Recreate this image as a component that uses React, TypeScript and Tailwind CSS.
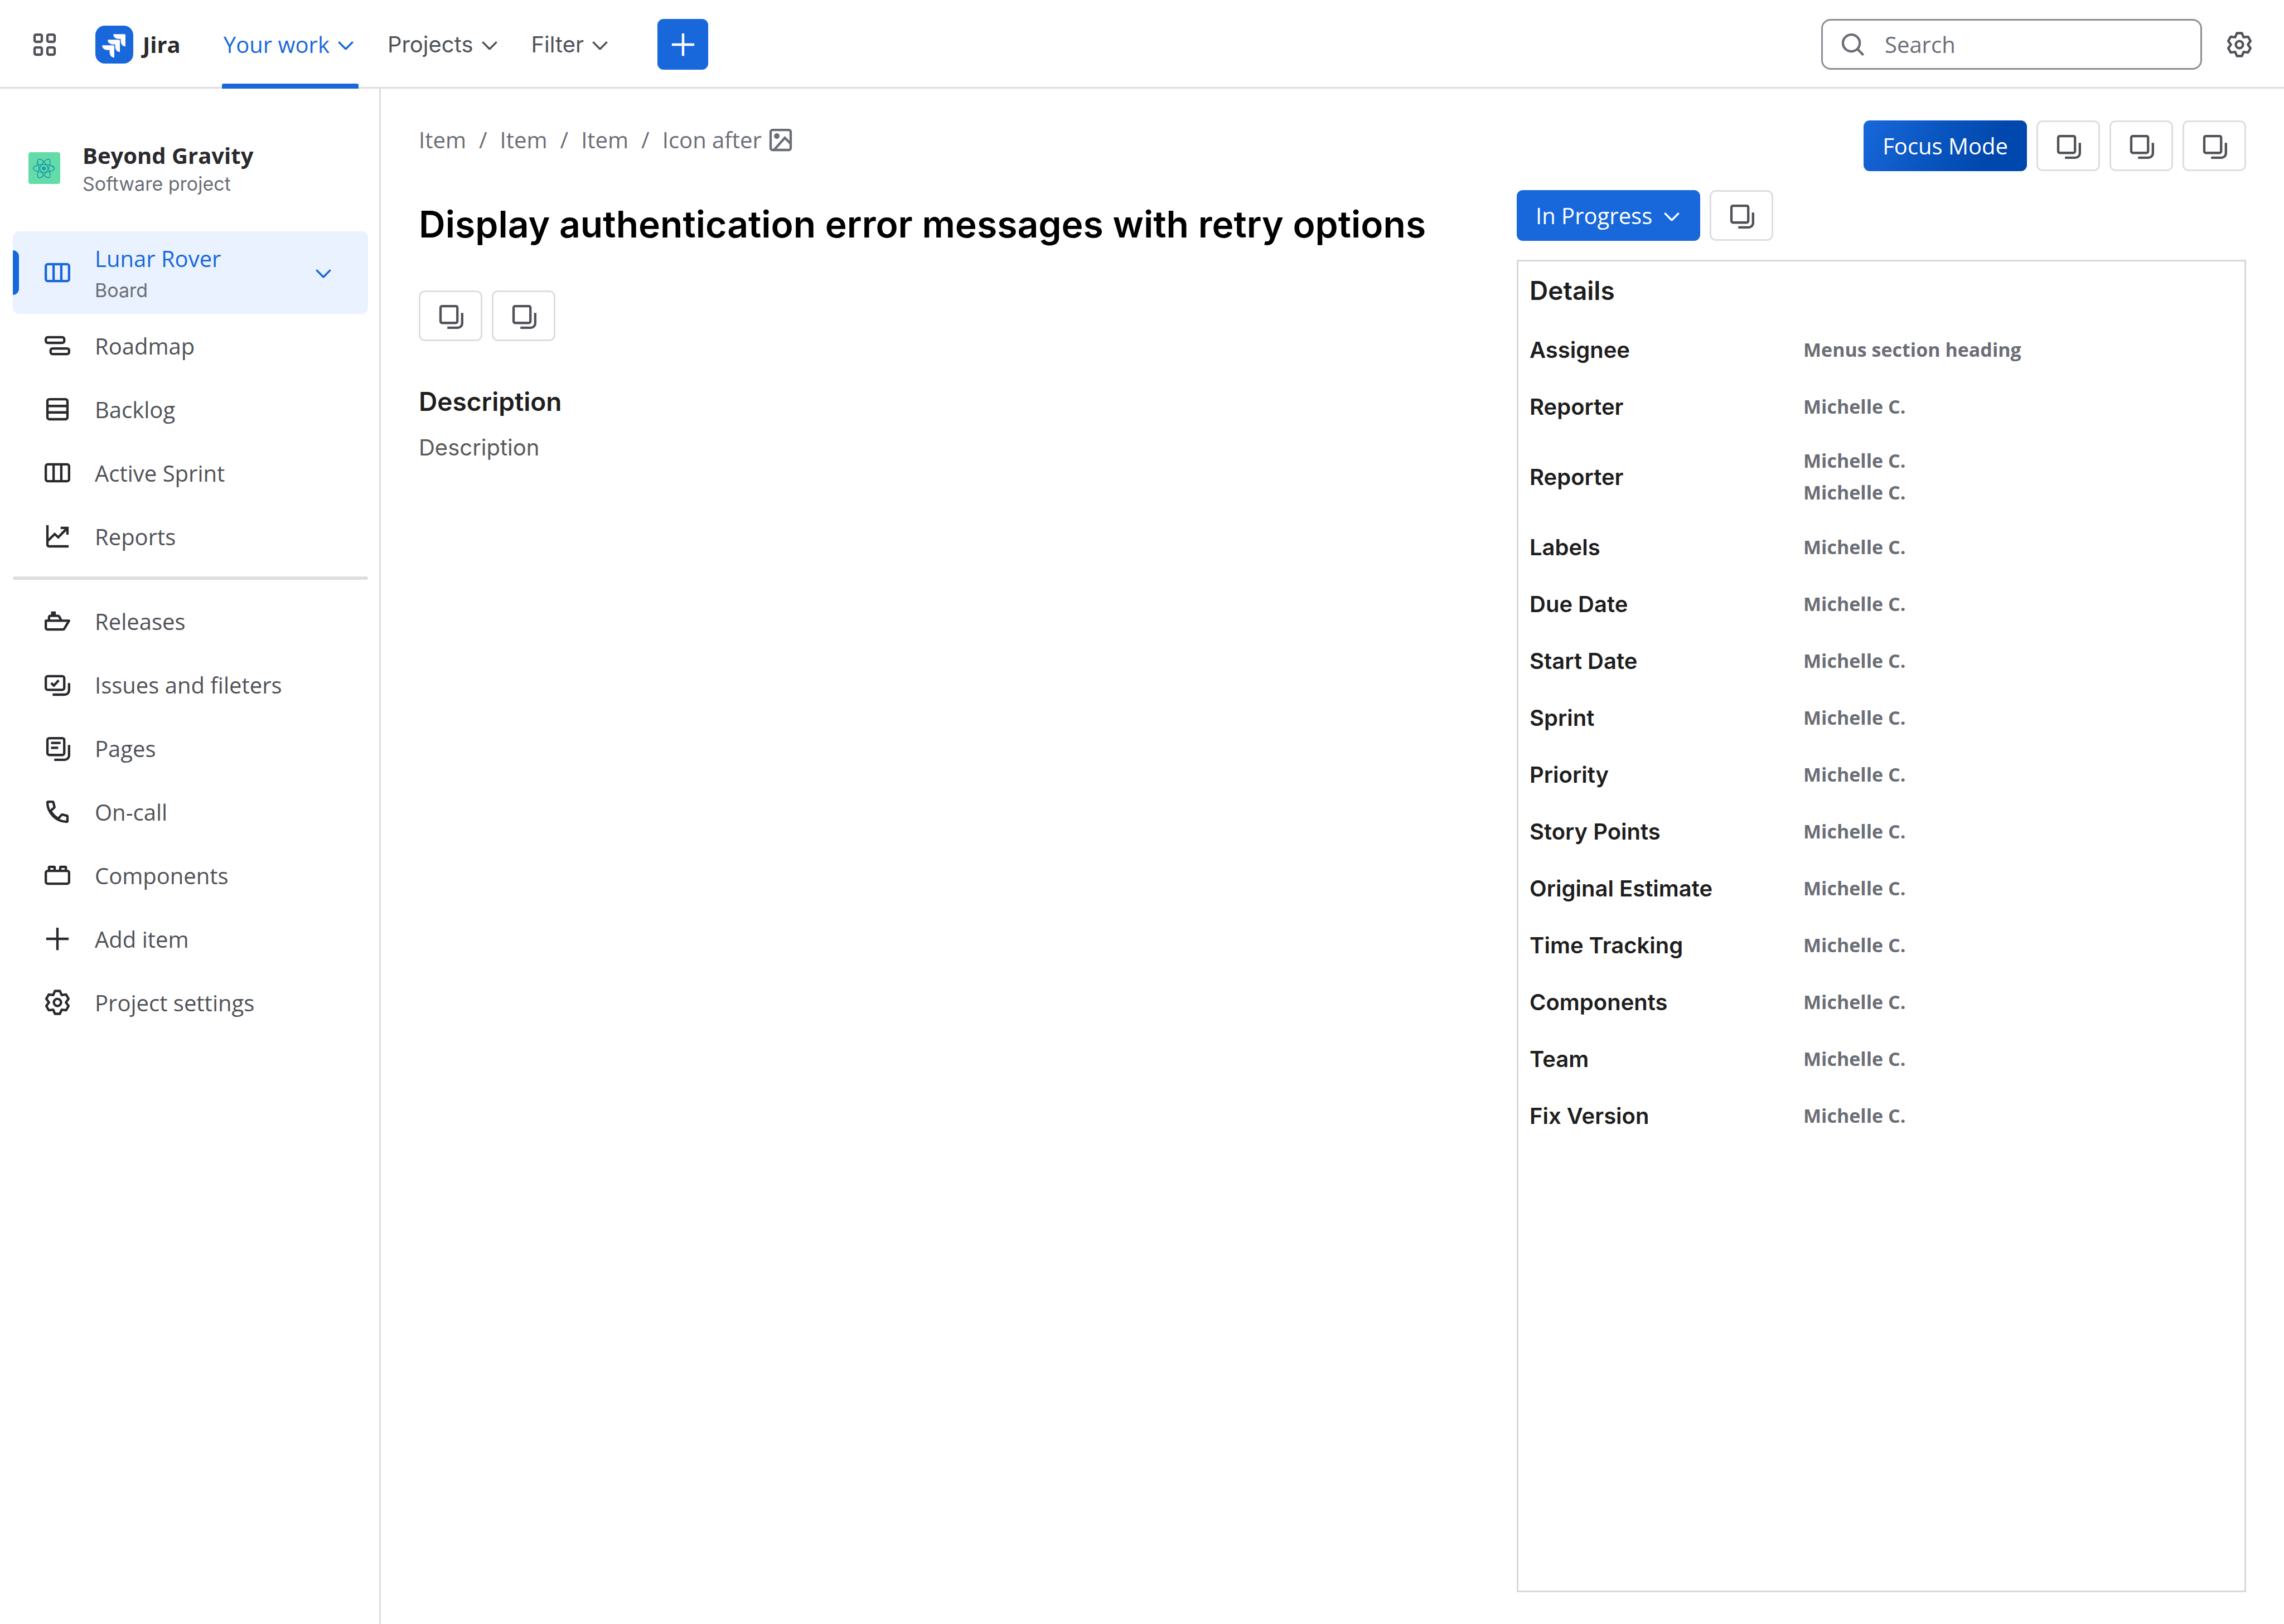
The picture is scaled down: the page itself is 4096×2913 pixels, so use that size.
import React from "react";

type Box = { className?: string; children?: React.ReactNode };

const Svg = ({ className = "size-[46px]", children }: Box) => (
  <svg viewBox="0 0 16 16" fill="none" stroke="currentColor" strokeWidth={1.5} className={"shrink-0 " + className} aria-hidden="true">
    {children}
  </svg>
);

const AppsIcon = () => (
  <Svg>
    <rect x="1.75" y="1.75" width="4.5" height="4.5" rx="0.9" />
    <rect x="9.75" y="1.75" width="4.5" height="4.5" rx="0.9" />
    <rect x="1.75" y="9.75" width="4.5" height="4.5" rx="0.9" />
    <rect x="9.75" y="9.75" width="4.5" height="4.5" rx="0.9" />
  </Svg>
);

const ChevronIcon = () => (
  <Svg>
    <path d="M3.6 6.3 8 10.8l4.4-4.5" strokeWidth={1.2} strokeLinejoin="bevel" />
  </Svg>
);

const PlusIcon = () => (
  <Svg>
    <path d="M8 1v14M1 8h14" />
  </Svg>
);

const SearchIcon = () => (
  <Svg>
    <circle cx="7" cy="7" r="5.25" />
    <path d="m10.8 10.8 3.7 3.7" />
  </Svg>
);

const GearIcon = () => (
  <Svg>
    <path
      strokeLinejoin="round"
      d="M6.48.86h3.04l1.13 2.55 2.77-.29 1.52 2.62L13.3 8l1.64 2.26-1.52 2.62-2.77-.29-1.13 2.55H6.48l-1.13-2.55-2.77.29-1.52-2.62L2.7 8 1.06 5.74l1.52-2.62 2.77.29z"
    />
    <circle cx="8" cy="8" r="2.25" />
  </Svg>
);

const CopyIcon = () => (
  <Svg>
    <rect x="1.75" y="1.75" width="10.5" height="10.5" rx="1" />
    <path d="M15.25 6v6.5a2.75 2.75 0 0 1-2.75 2.75H6" />
  </Svg>
);

const BoardIcon = () => (
  <Svg>
    <rect x="0.75" y="2.75" width="14.5" height="10.5" rx="1.2" />
    <path d="M5.6 3v10M10.4 3v10" />
  </Svg>
);

const RoadmapIcon = () => (
  <Svg>
    <rect x="0.75" y="2.75" width="11.5" height="3.5" rx="1.2" />
    <rect x="3.75" y="9.75" width="11.5" height="3.5" rx="1.2" />
  </Svg>
);

const BacklogIcon = () => (
  <Svg>
    <rect x="1.75" y="1.75" width="12.5" height="12.5" rx="1.2" />
    <path d="M2 6h12M2 10h12" />
  </Svg>
);

const ReportsIcon = () => (
  <Svg>
    <path d="M1.75 1v12.25a1 1 0 0 0 1 1H15" />
    <path d="M2 10.8l4.3-4.2 2.2 2L14 3M10 2.75h4.25v4.2" />
  </Svg>
);

const ShipIcon = () => (
  <Svg>
    <path strokeLinejoin="round" d="M.75 7.75h14.5l-3 5.05a1 1 0 0 1-.85.45H1.75a1 1 0 0 1-1-1z" />
    <path d="M2.75 7.5V5.6a.85.85 0 0 1 .85-.85h4.7a1 1 0 0 1 .85.5L10.3 7.5" />
    <path d="M4 3.4h3" strokeWidth={2.8} />
  </Svg>
);

const IssuesIcon = () => (
  <Svg>
    <rect x="0.75" y="2.75" width="11.5" height="8.5" rx="1.2" />
    <path d="m4.1 7 1.7 1.6 3-3.3" />
    <path d="M15.25 7v4.5a2.75 2.75 0 0 1-2.75 2.75H5" />
  </Svg>
);

const PagesIcon = () => (
  <Svg>
    <rect x="1.75" y="1.75" width="10.5" height="10.5" rx="1.2" />
    <path d="M4 4.75h6M4 7.75h4.5M15.25 6v6.5a2.75 2.75 0 0 1-2.75 2.75H6" />
  </Svg>
);

const PhoneIcon = () => (
  <Svg>
    <path
      strokeLinejoin="round"
      d="M1.75 2.3c0-.3.25-.55.55-.55h2.6c.25 0 .48.17.54.4l.7 2.75a.6.6 0 0 1-.2.6L3.7 7.4a11 11 0 0 0 4.9 4.9l1.9-2.3a.6.6 0 0 1 .6-.2l2.75.7c.25.06.4.28.4.54v2.66c0 .3-.25.55-.55.55C7.3 14.25 1.75 8.7 1.75 2.3z"
    />
  </Svg>
);

const BrickIcon = () => (
  <Svg>
    <rect x="0.75" y="5.25" width="14.5" height="8" rx="1.2" />
    <path d="M2.75 5.25V3.1a.35.35 0 0 1 .35-.35h2.8a.35.35 0 0 1 .35.35v2.15M9.75 5.25V3.1a.35.35 0 0 1 .35-.35h2.8a.35.35 0 0 1 .35.35v2.15" />
  </Svg>
);

const ImageIcon = () => (
  <Svg>
    <rect x="1.75" y="1.75" width="12.5" height="12.5" rx="1.2" />
    <circle cx="5.6" cy="5.6" r="1.75" fill="currentColor" stroke="none" />
    <path d="m3.9 14.2 6.7-7.5 3.7 3.7" />
  </Svg>
);

const JiraLogo = () => (
  <svg viewBox="0 0 24 24" className="size-[68px] shrink-0" aria-hidden="true">
    <rect width="24" height="24" rx="6" fill="#1868db" />
    <path
      fill="#fff"
      d="M9.051 15.434H7.734c-1.988 0-3.413-1.218-3.413-3h7.085c.367 0 .605.26.605.63v7.13c-1.772 0-2.96-1.435-2.96-3.434zm3.5-3.543h-1.318c-1.987 0-3.413-1.196-3.413-2.978h7.085c.367 0 .627.239.627.608v7.13c-1.772 0-2.981-1.435-2.981-3.434zm3.52-3.522h-1.317c-1.987 0-3.413-1.217-3.413-3h7.085c.367 0 .605.262.605.61v7.129c-1.771 0-2.96-1.435-2.96-3.434z"
    />
  </svg>
);

const ProjectAvatar = () => (
  <svg viewBox="0 0 20 20" className="size-[57px] shrink-0" aria-hidden="true">
    <rect width="20" height="20" rx="1.5" fill="#65dbaa" />
    <g fill="none" stroke="#159aa6" strokeWidth="0.55">
      <ellipse cx="9.7" cy="10.2" rx="6.6" ry="2.5" />
      <ellipse cx="9.7" cy="10.2" rx="6.6" ry="2.5" transform="rotate(60 9.7 10.2)" />
      <ellipse cx="9.7" cy="10.2" rx="6.6" ry="2.5" transform="rotate(120 9.7 10.2)" />
    </g>
    <g fill="#159aa6">
      <circle cx="9.7" cy="10.2" r="1.2" />
      <circle cx="5.7" cy="6.8" r="0.6" />
      <circle cx="15.4" cy="9" r="0.6" />
    </g>
  </svg>
);

const CopyButton = ({ label }: { label: string }) => (
  <button
    aria-label={label}
    className="flex h-[91px] w-[114px] shrink-0 items-center justify-center rounded-[11px] border-[3px] border-[#dddee1] bg-white text-[#505258]"
  >
    <CopyIcon />
  </button>
);

const menus = [
  { label: "Your work", active: true },
  { label: "Projects", active: false },
  { label: "Filter", active: false },
];

const TopBar = () => (
  <header className="flex h-[159px] items-center border-b-[3px] border-[#dddee1] px-[57px] pt-[3px]">
    <button aria-label="Switch apps" className="text-[#505258]">
      <AppsIcon />
    </button>
    <a href="#" className="ml-[68px] flex items-center gap-[17px] text-[40px] leading-[57px] font-bold text-[#292a2e]">
      <JiraLogo />
      Jira
    </a>
    <nav className="ml-[74px] flex gap-[49px] self-stretch">
      {menus.map((m) => (
        <button
          key={m.label}
          className={
            m.active
              ? "relative flex items-center gap-[6px] pl-[3px] text-[40px] leading-[57px] text-[#1868db]"
              : "flex items-center gap-[6px] pl-[3px] font-[Inter,sans-serif] text-[40px] leading-[57px] text-[#505258]"
          }
        >
          {m.label}
          <ChevronIcon />
          {m.active && <span className="absolute inset-x-0 -bottom-[3px] h-[9px] rounded-t-[3px] bg-[#1868db]" />}
        </button>
      ))}
    </nav>
    <button aria-label="Create" className="ml-[80px] flex size-[91px] items-center justify-center rounded-[11px] bg-[#1868db] text-white">
      <PlusIcon />
    </button>
    <label className="ml-auto flex h-[91px] w-[683px] items-center gap-[34px] rounded-[17px] border-[3px] border-[#8c8f97] pl-[31px] text-[#6b6e76]">
      <SearchIcon />
      <input
        type="search"
        aria-label="Search"
        placeholder="Search"
        className="min-w-0 flex-1 bg-transparent text-[40px] leading-[57px] outline-none placeholder:text-[#6b6e76]"
      />
    </label>
    <button aria-label="Settings" className="ml-[44px] text-[#505258]">
      <GearIcon />
    </button>
  </header>
);

const boardLinks = [
  { label: "Roadmap", Icon: RoadmapIcon },
  { label: "Backlog", Icon: BacklogIcon },
  { label: "Active Sprint", Icon: BoardIcon },
  { label: "Reports", Icon: ReportsIcon },
];

const projectLinks = [
  { label: "Releases", Icon: ShipIcon },
  { label: "Issues and fileters", Icon: IssuesIcon },
  { label: "Pages", Icon: PagesIcon },
  { label: "On-call", Icon: PhoneIcon },
  { label: "Components", Icon: BrickIcon },
  { label: "Add item", Icon: PlusIcon },
  { label: "Project settings", Icon: GearIcon },
];

const SideLink = ({ label, Icon }: { label: string; Icon: () => React.ReactElement }) => (
  <li>
    <a href="#" className="flex h-[114px] items-center gap-[44px] pl-[57px] text-[40px] leading-[57px] text-[#505258]">
      <span className="text-[#292a2e]">
        <Icon />
      </span>
      {label}
    </a>
  </li>
);

const SideBar = () => (
  <aside className="w-[683px] shrink-0 border-r-[3px] border-[#dddee1] pr-[20px] pl-[23px]">
    <div className="mt-[91px] flex items-center gap-[40px] pl-[28px]">
      <ProjectAvatar />
      <div>
        <p className="text-[40px] leading-[57px] font-bold text-[#292a2e]">Beyond Gravity</p>
        <p className="font-[Inter,sans-serif] text-[34px] leading-[46px] text-[#6b6e76]">Software project</p>
      </div>
    </div>
    <nav>
      <button className="relative mt-[62px] flex h-[148px] w-full items-center gap-[44px] overflow-hidden rounded-[11px] bg-[#e9f2fe] pr-[57px] pl-[57px] text-left text-[#1868db]">
        <span className="absolute left-0 h-[80px] w-[11px] rounded-r-[11px] bg-[#1868db]" />
        <BoardIcon />
        <span className="flex-1 pt-[5px]">
          <span className="block text-[40px] leading-[57px]">Lunar Rover</span>
          <span className="block font-[Inter,sans-serif] text-[34px] leading-[57px] text-[#6b6e76]">Board</span>
        </span>
        <ChevronIcon />
      </button>
      <ul>
        {boardLinks.map((l) => (
          <SideLink key={l.label} {...l} />
        ))}
      </ul>
      <hr className="mt-[15px] mb-[17px] h-[6px] rounded-full border-0 bg-[#dddee1]" />
      <ul>
        {projectLinks.map((l) => (
          <SideLink key={l.label} {...l} />
        ))}
      </ul>
    </nav>
  </aside>
);

const Issue = () => (
  <section className="min-w-0 flex-1 pt-[63px]">
    <nav aria-label="Breadcrumb">
      <ol className="flex items-center text-[40px] leading-[57px] text-[#6b6e76]">
        {["Item", "Item", "Item"].map((t, i) => (
          <li key={i} className="flex">
            <a href="#">{t}</a>
            <span className="mx-[23px]">/</span>
          </li>
        ))}
        <li>
          <a href="#" className="flex items-center gap-[11px]">
            Icon after
            <ImageIcon />
          </a>
        </li>
      </ol>
    </nav>
    <h1 className="mt-[82px] font-[Inter,sans-serif] text-[66px] leading-[82px] font-semibold text-black">
      Display authentication error messages with retry options
    </h1>
    <div className="mt-[78px] flex gap-[17px]">
      <CopyButton label="Copy" />
      <CopyButton label="Duplicate" />
    </div>
    <h2 className="mt-[80px] font-[Inter,sans-serif] text-[46px] leading-[57px] font-semibold text-[#1e1e1e]">Description</h2>
    <p className="mt-[25px] font-[Inter,sans-serif] text-[40px] leading-[57px] text-[#5a5a5a]">Description</p>
  </section>
);

const fields: { name: string; values: string[] }[] = [
  { name: "Assignee", values: ["Menus section heading"] },
  { name: "Reporter", values: ["Michelle C."] },
  { name: "Reporter", values: ["Michelle C.", "Michelle C."] },
  { name: "Labels", values: ["Michelle C."] },
  { name: "Due Date", values: ["Michelle C."] },
  { name: "Start Date", values: ["Michelle C."] },
  { name: "Sprint", values: ["Michelle C."] },
  { name: "Priority", values: ["Michelle C."] },
  { name: "Story Points", values: ["Michelle C."] },
  { name: "Original Estimate", values: ["Michelle C."] },
  { name: "Time Tracking", values: ["Michelle C."] },
  { name: "Components", values: ["Michelle C."] },
  { name: "Team", values: ["Michelle C."] },
  { name: "Fix Version", values: ["Michelle C."] },
];

const Details = () => (
  <section className="flex w-[1308px] shrink-0 flex-col gap-[34px] py-[57px]">
    <div className="flex justify-end gap-[17px]">
      <button className="h-[91px] rounded-[11px] bg-linear-120 from-[#1868db] to-[#0048ad] to-75% px-[34px] text-[40px] leading-[57px] text-white">
        Focus Mode
      </button>
      <CopyButton label="Copy link" />
      <CopyButton label="Share" />
      <CopyButton label="More actions" />
    </div>
    <div className="flex gap-[17px]">
      <button className="flex h-[91px] items-center gap-[12px] rounded-[11px] bg-[#1868db] pr-[28px] pl-[34px] text-[40px] leading-[57px] text-white">
        In Progress
        <ChevronIcon />
      </button>
      <CopyButton label="Copy status" />
    </div>
    <div className="flex-1 border-[3px] border-[#d9d9d9] px-[20px]">
      <h2 className="pt-[24px] pb-[26px] font-[Inter,sans-serif] text-[46px] leading-[57px] font-semibold text-[#1e1e1e]">Details</h2>
      <dl>
        {fields.map((f, i) => (
          <div key={i} className="flex min-h-[102px] items-center py-[18px]">
            <dt className="w-[491px] font-[Inter,sans-serif] text-[40px] leading-[57px] font-semibold text-[#1e1e1e]">{f.name}</dt>
            <dd className="text-[34px] leading-[57px] font-bold text-[#6b6e76]">
              {f.values.map((v, j) => (
                <p key={j}>{v}</p>
              ))}
            </dd>
          </div>
        ))}
      </dl>
    </div>
  </section>
);

export default function App() {
  return (
    <div className="flex min-h-screen flex-col bg-white font-['Open_Sans',sans-serif]">
      <TopBar />
      <div className="flex flex-1">
        <SideBar />
        <main className="flex flex-1 gap-[68px] px-[68px]">
          <Issue />
          <Details />
        </main>
      </div>
    </div>
  );
}
